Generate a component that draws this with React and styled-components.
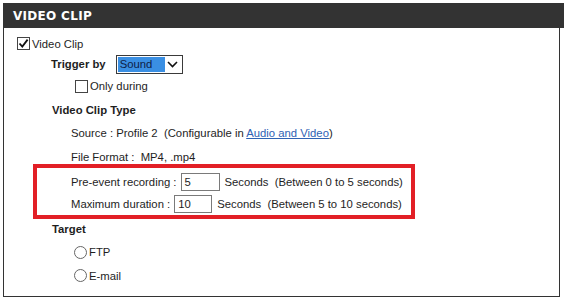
import React from 'react';
import styled, { createGlobalStyle } from 'styled-components';

const GlobalStyle = createGlobalStyle`
  html, body {
    margin: 0;
    padding: 0;
    background: #fff;
  }
  body {
    font-family: "Liberation Sans", Arial, sans-serif;
    font-size: 11.3px;
    color: #1e1e1e;
  }
`;

const CheckMark = () => (
  <svg width="11" height="11" viewBox="0 0 11 11">
    <path d="M1.5 5.5 L4.3 8.6 L9.6 1.6" fill="none" stroke="#111" strokeWidth="1.8" />
  </svg>
);

const Chevron = () => (
  <svg width="11" height="7" viewBox="0 0 11 7">
    <path d="M1 1 L5.5 5.5 L10 1" fill="none" stroke="#111" strokeWidth="1.6" />
  </svg>
);

const App = () => {
  return (
    <Wrapper>
      <GlobalStyle />
      <Header>VIDEO CLIP</Header>
      <Body>
        <Row $h={21} $indent={13}>
          <CheckBox $checked>
            <CheckMark />
          </CheckBox>
          <span>Video Clip</span>
        </Row>
        <Row $h={20} $indent={47}>
          <Label>Trigger by</Label>
          <Select>
            <SelectValue>Sound</SelectValue>
            <SelectArrow>
              <Chevron />
            </SelectArrow>
          </Select>
        </Row>
        <Row $h={24} $indent={71}>
          <CheckBox />
          <span>Only during</span>
        </Row>
        <Row $h={24} $indent={48}>
          <Label>Video Clip Type</Label>
        </Row>
        <Row $h={23} $indent={67}>
          <Text>
            Source : Profile 2&nbsp; (Configurable in <Link href="#">Audio and Video</Link>)
          </Text>
        </Row>
        <Row $h={19} $indent={67} $align="flex-end">
          <Text>File Format :&nbsp; MP4, .mp4</Text>
        </Row>
        <HighlightBox>
          <Row $h={22} $indent={34}>
            <Text>Pre-event recording :</Text>
            <NumberBox $w={39}>5</NumberBox>
            <Text>Seconds&nbsp; (Between 0 to 5 seconds)</Text>
          </Row>
          <Row $h={22} $indent={34}>
            <Text>Maximum duration :</Text>
            <NumberBox $w={38}>10</NumberBox>
            <Text>Seconds&nbsp; (Between 5 to 10 seconds)</Text>
          </Row>
        </HighlightBox>
        <Row $h={20} $indent={48}>
          <Label>Target</Label>
        </Row>
        <Row $h={26} $indent={70}>
          <Radio />
          <span>FTP</span>
        </Row>
        <Row $h={21} $indent={70}>
          <Radio />
          <span>E-mail</span>
        </Row>
      </Body>
    </Wrapper>
  );
};

export default App;

const Wrapper = styled.div`
  width: 561px;
  padding: 3px 0 0 3px;
`;

const Header = styled.div`
  height: 25px;
  background: #333333;
  color: #fff;
  font-family: "DejaVu Sans", Verdana, sans-serif;
  font-weight: 700;
  font-size: 12px;
  letter-spacing: 0.3px;
  display: flex;
  align-items: center;
  padding-left: 10px;
`;

const Body = styled.div`
  width: 557px;
  box-sizing: border-box;
  border: 1px solid #333;
  border-top: none;
  padding: 5px 0 10px 0;
`;

const Row = styled.div`
  height: ${(p) => p.$h}px;
  display: flex;
  align-items: ${(p) => p.$align || 'center'};
  padding-left: ${(p) => p.$indent}px;
  white-space: nowrap;
`;

const Text = styled.span`
  line-height: 13px;
`;

const Label = styled.span`
  font-weight: 700;
  line-height: 13px;
`;

const CheckBox = styled.span`
  width: 11px;
  height: 11px;
  border: 1px solid #444;
  background: #fff;
  display: inline-flex;
  align-items: center;
  justify-content: center;
  margin-right: 2px;
`;

const Radio = styled.span`
  width: 11px;
  height: 11px;
  border: 1px solid #666;
  border-radius: 50%;
  background: #fff;
  margin-right: 2px;
`;

const Select = styled.div`
  margin-left: 10px;
  width: 63px;
  height: 15px;
  border: 1px solid #3a3a3a;
  display: flex;
  align-items: stretch;
  padding: 1px;
  box-sizing: content-box;
`;

const SelectValue = styled.div`
  width: 47px;
  background: #3a8fe3;
  color: #0f2146;
  display: flex;
  align-items: center;
  padding-left: 2px;
  box-sizing: border-box;
`;

const SelectArrow = styled.div`
  flex: 1;
  display: flex;
  align-items: center;
  justify-content: center;
`;

const Link = styled.a`
  color: #2f62b4;
  text-decoration: underline;
`;

const HighlightBox = styled.div`
  margin-left: 29px;
  width: 382px;
  box-sizing: border-box;
  border: 4px solid #e21f26;
  padding-top: 3px;
`;

const NumberBox = styled.span`
  width: ${(p) => p.$w}px;
  height: 18px;
  box-sizing: border-box;
  border: 1px solid #7a7a7a;
  margin: 0 5px 0 4px;
  padding-left: 3px;
  display: flex;
  align-items: center;
`;
